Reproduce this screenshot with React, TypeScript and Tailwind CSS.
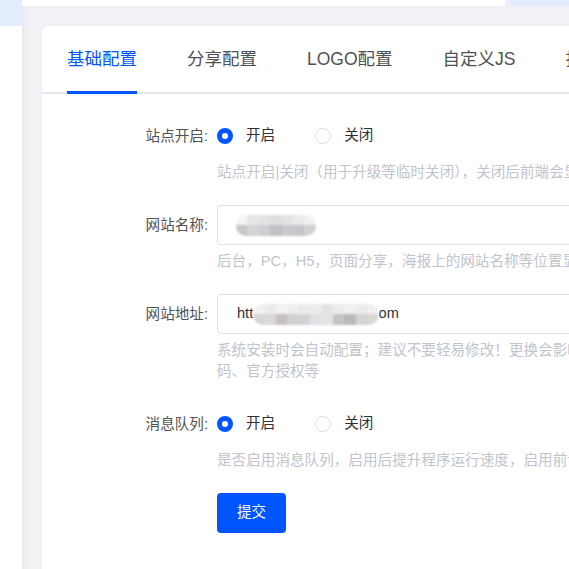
import React from 'react';

// 表单行：左侧标签 + 右侧控件 + 帮助文字
const FormRow = ({
  label,
  help,
  children,
}: {
  label: string;
  help: React.ReactNode;
  children: React.ReactNode;
}) => (
  <div className="flex items-start mb-[22px]">
    <label className="w-[166px] shrink-0 text-right h-10 leading-10 text-[14.6px] text-[#505255]">{label}:</label>
    <div className="ml-[9px] flex-1">
      {children}
      <div className="mt-[6px] leading-[21px] text-[14.6px] text-[#c0c4cc] whitespace-nowrap">{help}</div>
    </div>
  </div>
);

const Radio = ({ checked, text }: { checked?: boolean; text: string }) => (
  <span className="flex items-center gap-[13px]">
    {checked ? (
      <span className="w-4 h-4 rounded-full bg-[#0055ff] flex items-center justify-center">
        <span className="w-[6px] h-[6px] rounded-full bg-white"></span>
      </span>
    ) : (
      <span className="w-4 h-4 rounded-full border border-[#dcdfe6] bg-white"></span>
    )}
    <span className="text-[14.6px] text-[#303133]">{text}</span>
  </span>
);

const RadioGroup = () => (
  <div className="h-10 flex items-center gap-[40px]">
    <Radio checked text="开启" />
    <Radio text="关闭" />
  </div>
);

// 打码块
const Mosaic = ({ top, bottom }: { top: string[]; bottom: string[] }) => (
  <span className="inline-flex flex-col blur-[0.8px] rounded-[10px] overflow-hidden">
    <span className="flex">
      {top.map((c, i) => (
        <span key={i} className="w-[11.4px] h-[10px]" style={{ background: c }}></span>
      ))}
    </span>
    <span className="flex">
      {bottom.map((c, i) => (
        <span key={i} className="w-[11.4px] h-[11px]" style={{ background: c }}></span>
      ))}
    </span>
  </span>
);

const tabs = ['基础配置', '分享配置', 'LOGO配置', '自定义JS', '拓展配置'];

export default function App() {
  return (
    <div
      className="w-full h-[569px] overflow-hidden flex bg-white"
      style={{ fontFamily: '"Liberation Sans", "Noto Sans CJK SC", sans-serif' }}
    >
      {/* 左侧栏 */}
      <div className="w-[22px] shrink-0 flex flex-col">
        <div className="h-[26px] bg-[#e4edfd]"></div>
        <div className="flex-1 bg-white"></div>
      </div>

      {/* 主区域 */}
      <div className="flex-1 min-w-0 bg-[#f0f2f5] shadow-[inset_4px_0_4px_-3px_rgba(0,0,0,0.07)] flex flex-col">
        <div className="h-[6px] flex">
          <div className="flex-1 bg-white"></div>
          <div className="w-[64px] bg-[#e4edfd] [clip-path:polygon(5px_0,100%_0,100%_100%,0_100%)]"></div>
        </div>

        <div className="mt-[20px] ml-[20px] w-[760px] flex-1 bg-white rounded-tl-[6px]">
          {/* 标签页 */}
          <div className="h-[68px] border-b-2 border-[#e4e7ed] flex gap-[50px] pl-[25px]">
            {tabs.map((t, i) => (
              <div
                key={t}
                className={
                  i === 0
                    ? 'relative pt-[21px] leading-[24px] text-[17.5px] text-[#0055ff] whitespace-nowrap'
                    : 'relative pt-[21px] leading-[24px] text-[17.5px] text-[#505255] whitespace-nowrap'
                }
              >
                {t}
                {i === 0 && <span className="absolute left-0 right-0 -bottom-[2px] h-[3px] bg-[#0055ff]"></span>}
              </div>
            ))}
          </div>

          {/* 表单 */}
          <div className="pt-[22px]">
            <FormRow label="站点开启" help="站点开启|关闭（用于升级等临时关闭），关闭后前端会显示站点关闭提示">
              <RadioGroup />
            </FormRow>

            <FormRow label="网站名称" help="后台，PC，H5，页面分享，海报上的网站名称等位置显示">
              <div className="h-10 border border-[#dcdfe6] rounded-[4px] flex items-center pl-[18px]">
                <Mosaic
                  top={['#f3f3f3', '#e6e6e7', '#e2e2e3', '#dcdde0', '#e3e3e5', '#eaeaec', '#f0f0f1']}
                  bottom={['#c6c6c8', '#d4d4d6', '#ccced1', '#c0c1c4', '#c9c9cc', '#c4c6c9', '#cfd0d3']}
                />
              </div>
            </FormRow>

            <FormRow
              label="网站地址"
              help={
                <>
                  系统安装时会自动配置；建议不要轻易修改！更换会影响支付回调、小程序二维
                  <br />
                  码、官方授权等
                </>
              }
            >
              <div className="h-10 border border-[#dcdfe6] rounded-[4px] flex items-center pl-[19px] text-[14.6px] text-[#303133]">
                <span>htt</span>
                <Mosaic
                  top={['#f1f1f1', '#ebebeb', '#f0f2f4', '#ededed', '#eaeaea', '#ececed', '#e3e3e4', '#eaecef', '#eeeff1', '#ebebec', '#f0f0f0']}
                  bottom={['#d6d6d7', '#d9d9da', '#c8c0be', '#d3d0cc', '#d0d4d8', '#e2e2e2', '#e6e4df', '#c4c4c5', '#b9b9ba', '#d2d4d7', '#dbd8d4']}
                />
                <span>om</span>
              </div>
            </FormRow>

            <FormRow label="消息队列" help="是否启用消息队列，启用后提升程序运行速度，启用前请确认服务器已配置">
              <RadioGroup />
            </FormRow>

            <div className="pl-[175px]">
              <button className="w-[69px] h-10 rounded-[4px] bg-[#0055ff] text-white text-[14.6px]">提交</button>
            </div>
          </div>
        </div>
      </div>
    </div>
  );
}
